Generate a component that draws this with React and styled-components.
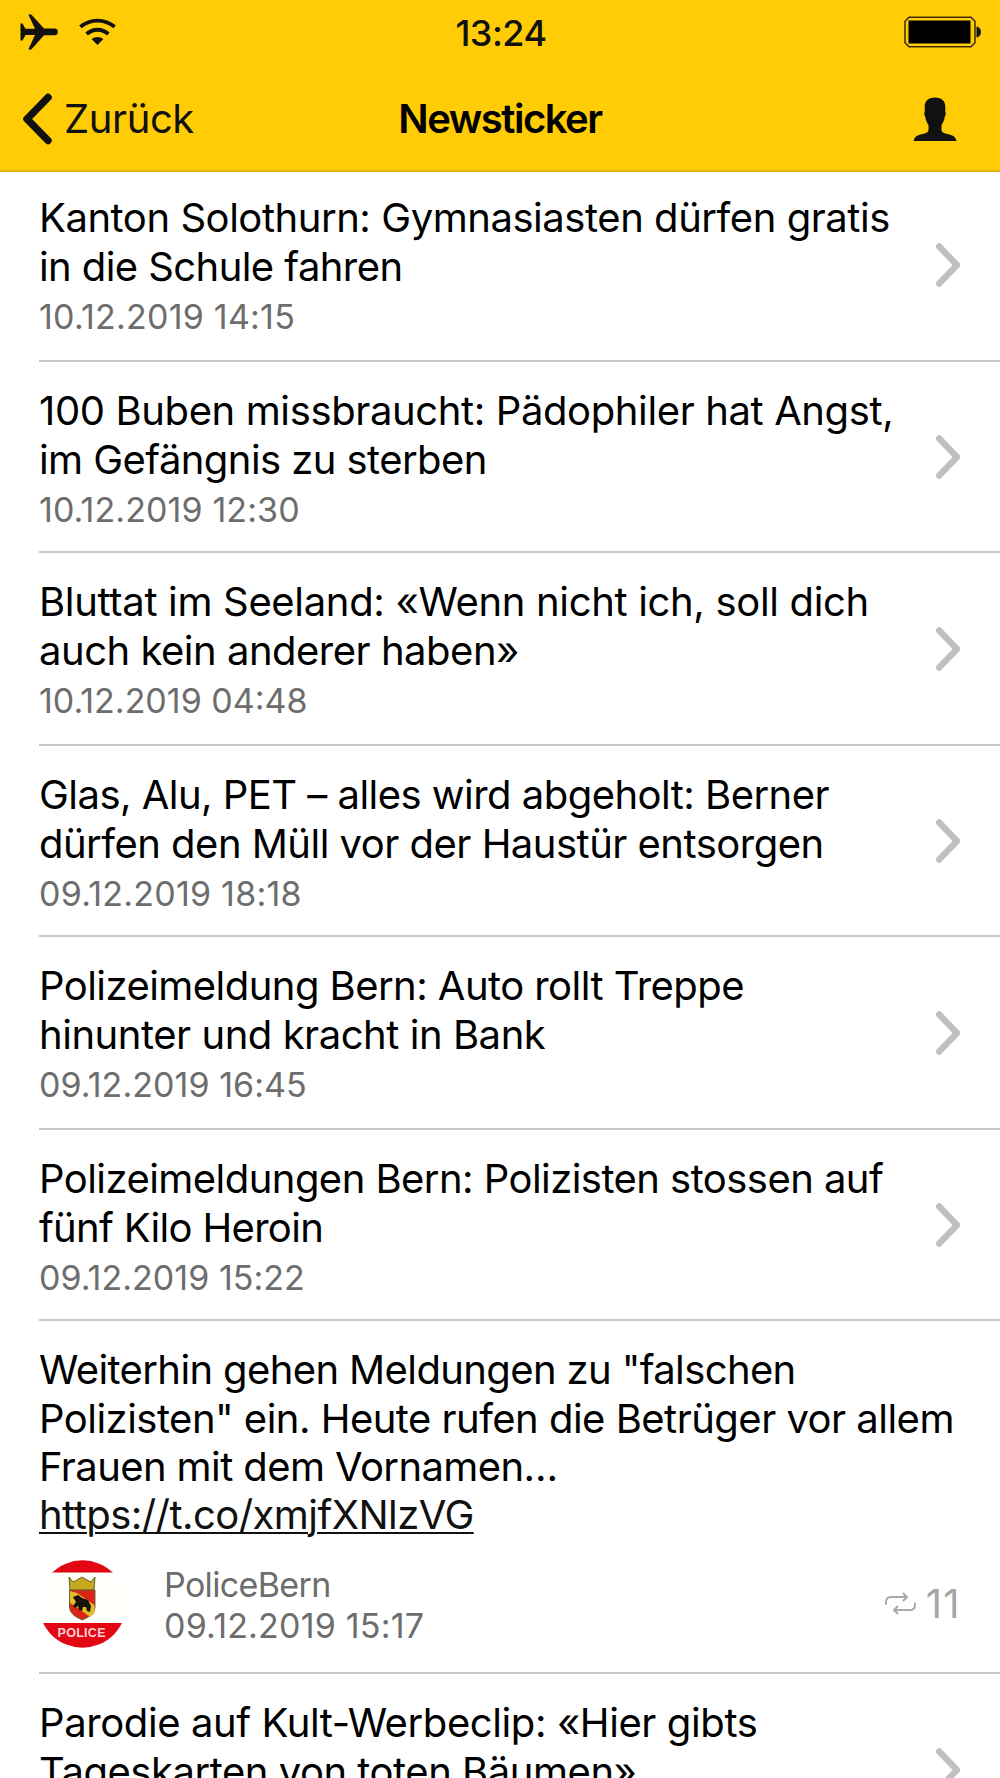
import styled, { createGlobalStyle } from "styled-components"

const GlobalStyle = createGlobalStyle`
  * {
    box-sizing: border-box;
  }
  body {
    margin: 0;
    background: #fff;
    font-family: Inter, "Liberation Sans", sans-serif;
  }
`

const Screen = styled.div`
  width: 1000px;
  height: 1778px;
  overflow: hidden;
  background: #fff;
`

const Header = styled.header`
  height: 172px;
  background: #ffcc05;
  border-bottom: 2px solid #dfb30c;
`

const StatusBar = styled.div`
  display: grid;
  grid-template-columns: 1fr auto 1fr;
  align-items: center;
  height: 64px;
  padding: 0 18px 0 20px;
`

const StatusIcons = styled.div`
  display: flex;
  align-items: center;
  gap: 21px;
`

const Clock = styled.span`
  padding-top: 2px;
  font-size: 36px;
  line-height: 44px;
  font-weight: 450;
  letter-spacing: -0.5px;
  color: #111;
`

const NavBar = styled.nav`
  display: grid;
  grid-template-columns: 1fr auto 1fr;
  align-items: center;
  height: 106px;
  padding: 3px 22px 0;
`

const Back = styled.a`
  display: flex;
  align-items: center;
  gap: 11px;
  font-size: 40px;
  line-height: 48px;
  letter-spacing: -0.4px;
  color: #111;
`

const Title = styled.h1`
  margin: 0;
  font-size: 40px;
  line-height: 48px;
  font-weight: 600;
  letter-spacing: -1.5px;
  color: #000;
`

const Right = styled.div`
  display: flex;
  justify-content: flex-end;
  padding-right: ${(props) => props.$inset || 0}px;
`

/* the list is scrolled a little under the header */
const List = styled.ul`
  margin: -3px 0 0;
  padding: 0;
  list-style: none;
`

const Item = styled.li`
  display: flex;
  align-items: center;
  justify-content: space-between;
  height: ${(props) => props.$height}px;
  margin-left: 39px;
  padding-right: 39px;
  border-bottom: 2px solid #c8c7cc;
`

const ItemText = styled.div`
  align-self: flex-start;
  padding-top: 25.3px;
`

const Tweet = styled(Item)`
  display: block;
  padding-top: 25.3px;
`

const Headline = styled.div`
  font-size: 40px;
  line-height: 48.3px;
  color: #000;
`

const Line = styled.span`
  display: block;
  white-space: nowrap;
  letter-spacing: ${(props) => props.$tracking || 0}px;
`

const Meta = styled.div`
  font-size: 34px;
  line-height: 41px;
  color: #6d6d6d;
`

const DateText = styled(Meta)`
  margin-top: 5.1px;
`

const Link = styled.a`
  display: inline-block;
  letter-spacing: ${(props) => props.$tracking || 0}px;
  color: #111;
  text-decoration: underline;
  text-decoration-thickness: 2px;
  text-underline-offset: 3px;
`

const Author = styled.div`
  display: flex;
  align-items: center;
  margin-top: 20.5px;
`

const AuthorText = styled.div`
  flex: 1;
  margin-left: 38px;
  padding-top: 2px;
`

const Retweets = styled.div`
  display: flex;
  align-items: center;
  gap: 10px;
  font-size: 40px;
  line-height: 48px;
  letter-spacing: 1.4px;
  color: #a6a6a6;
`

const Plane = () => (
  <svg width="38" height="36" viewBox="0 0 38 36">
    <path
      d="M0.5 9.500h2L5.500 14.800h9.500L8.300 0.500h3L24 14.600h10.500a3.200 3.200 0 0 1 0 6.600H24L11.300 35.500h-3L15 21H5.500L2.500 26.500h-2z"
      fill="#111"
    />
  </svg>
)

const Wifi = () => (
  <svg width="37" height="28" viewBox="0 0 37 28">
    <g fill="none" stroke="#111" strokeWidth="3.8">
      <path d="M1.400 8.900C11.500 0.400 25.500 0.400 35.600 8.900" />
      <path d="M7.600 16C14 10.300 23 10.300 29.400 16" />
    </g>
    <path d="M12.6 21C16 18.200 21 18.200 24.400 21L18.500 27z" fill="#111" />
  </svg>
)

const Battery = () => (
  <svg width="78" height="32" viewBox="0 0 78 32">
    <path
      d="M5 1.2h62l4 4v21.600l-4 4H5l-4-4V5.200z"
      fill="none"
      stroke="#3a2d00"
      strokeWidth="1.5"
    />
    <rect x="4.500" y="4.500" width="62" height="23" fill="#000" />
    <path d="M72.5 10.5c6 1 6 10 0 11z" fill="#111" />
  </svg>
)

const BackArrow = () => (
  <svg width="31" height="52" viewBox="0 0 31 52">
    <path
      d="M26 4.5L5 26L26 47.5"
      fill="none"
      stroke="#111"
      strokeWidth="7.5"
      strokeLinecap="round"
      strokeLinejoin="round"
    />
  </svg>
)

const Person = () => (
  <svg width="44" height="44" viewBox="0 0 44 44">
    <path
      d="M22 0.500c7 0 10.500 4 10.300 9.500v5c.8.5.5 3.500-.5 4.500-.5 4-2 6.500-3.300 8.500v5.500c1 3 4.500 3 8 4 4 1 6.500 3 7 6.500H0.500c.5-3.500 3-5.500 7-6.500 3.500-1 7-1 8-4V28c-1.300-2-2.800-4.500-3.300-8.500-1-1-1.300-4-.5-4.500v-5C11.500 4.500 15 .5 22 .5z"
      fill="#111"
    />
  </svg>
)

const Chevron = () => (
  <svg width="25" height="44" viewBox="0 0 25 44">
    <path
      d="M3.200 3.500L21 22L3.200 40.500"
      fill="none"
      stroke="#c0c0c0"
      strokeWidth="6.4"
      strokeLinecap="round"
      strokeLinejoin="round"
    />
  </svg>
)

const RetweetIcon = () => (
  <svg width="31" height="23" viewBox="0 0 31 23">
    <g
      fill="none"
      stroke="#a9a9a9"
      strokeWidth="2"
      strokeLinecap="round"
      strokeLinejoin="round"
    >
      <path d="M1 12V10Q1 5 6 5H21.500M18.500 1.500L22 5L18.500 8.500" />
      <path d="M30 11.500V13Q30 18 25 18H9.500M12.500 14.500L9 18L12.500 21.500" />
    </g>
  </svg>
)

const Avatar = () => (
  <svg width="87" height="88" viewBox="0 0 87 88">
    <clipPath id="round">
      <circle cx="43.500" cy="44" r="43.700" />
    </clipPath>
    <g clipPath="url(#round)">
      <rect width="87" height="88" fill="#fffffb" />
      <rect width="87" height="12.500" fill="#e30613" />
      <rect y="63" width="87" height="25" fill="#e30613" />
      <path
        d="M30 17l4 5 4-2 5-3 5 3 4 2 4-5-1 13H31z"
        fill="#c9a91c"
        stroke="#655b27"
      />
      <path
        d="M30.500 30h25.500v17q0 8-12.700 13q-12.800-5-12.800-13z"
        fill="#db2418"
        stroke="#6d6430"
      />
      <path d="M31 31l7 2 17.500 12v8l-4 4L31 43z" fill="#e1bd26" />
      <path
        d="M34 37l5-2 4 3 6 2 3 6-1 6-3-1-1-4-3 0-1 4-3-1-1-4-3 2-2-2 3-4z"
        fill="#17150b"
      />
      <text
        x="42.500"
        y="77"
        textAnchor="middle"
        fontFamily="Liberation Sans, sans-serif"
        fontSize="12.5"
        fontWeight="700"
        textLength="48"
        fill="#ffd3d6"
      >
        POLICE
      </text>
    </g>
  </svg>
)

const news = [
  {
    lines: [
      {
        text: "Kanton Solothurn: Gymnasiasten dürfen gratis",
        tracking: -0.45,
      },
      { text: "in die Schule fahren", tracking: -0.58 },
    ],
    date: { text: "10.12.2019 14:15", tracking: 0.23 },
    height: 193,
  },
  {
    lines: [
      { text: "100 Buben missbraucht: Pädophiler hat Angst,", tracking: -0.38 },
      { text: "im Gefängnis zu sterben", tracking: -0.57 },
    ],
    date: { text: "10.12.2019 12:30", tracking: 0.1 },
    height: 191,
  },
  {
    lines: [
      {
        text: "Bluttat im Seeland: «Wenn nicht ich, soll dich",
        tracking: -0.33,
      },
      { text: "auch kein anderer haben»", tracking: -0.49 },
    ],
    date: { text: "10.12.2019 04:48" },
    height: 193,
  },
  {
    lines: [
      { text: "Glas, Alu, PET – alles wird abgeholt: Berner", tracking: -0.53 },
      { text: "dürfen den Müll vor der Haustür entsorgen", tracking: -0.51 },
    ],
    date: { text: "09.12.2019 18:18", tracking: 0.23 },
    height: 191,
  },
  {
    lines: [
      { text: "Polizeimeldung Bern: Auto rollt Treppe", tracking: -0.55 },
      { text: "hinunter und kracht in Bank", tracking: -0.46 },
    ],
    date: { text: "09.12.2019 16:45", tracking: 0.06 },
    height: 193,
  },
  {
    lines: [
      {
        text: "Polizeimeldungen Bern: Polizisten stossen auf",
        tracking: -0.55,
      },
      { text: "fünf Kilo Heroin", tracking: -0.68 },
    ],
    date: { text: "09.12.2019 15:22", tracking: 0.03 },
    height: 191,
  },
]

const NewsItem = ({ lines, date, height }) => (
  <Item $height={height}>
    <ItemText>
      <Headline>
        {lines.map((line) => (
          <Line key={line.text} $tracking={line.tracking}>
            {line.text}
          </Line>
        ))}
      </Headline>
      {date && (
        <DateText>
          <Line $tracking={date.tracking}>{date.text}</Line>
        </DateText>
      )}
    </ItemText>
    <Chevron />
  </Item>
)

export default function App() {
  return (
    <Screen>
      <GlobalStyle />
      <Header>
        <StatusBar>
          <StatusIcons>
            <Plane />
            <Wifi />
          </StatusIcons>
          <Clock>13:24</Clock>
          <Right>
            <Battery />
          </Right>
        </StatusBar>
        <NavBar>
          <Back>
            <BackArrow />
            Zurück
          </Back>
          <Title>Newsticker</Title>
          <Right $inset={21}>
            <Person />
          </Right>
        </NavBar>
      </Header>
      <List>
        {news.map((item) => (
          <NewsItem key={item.date.text} {...item} />
        ))}
        <Tweet $height={353}>
          <Headline>
            <Line $tracking={-0.62}>Weiterhin gehen Meldungen zu "falschen</Line>
            <Line $tracking={-0.52}>
              Polizisten" ein. Heute rufen die Betrüger vor allem
            </Line>
            <Line $tracking={-0.6}>Frauen mit dem Vornamen…</Line>
            <Link $tracking={-0.55}>https://t.co/xmjfXNlzVG</Link>
          </Headline>
          <Author>
            <Avatar />
            <AuthorText>
              <Meta>
                <Line $tracking={-0.65}>PoliceBern</Line>
                <Line $tracking={0.2}>09.12.2019 15:17</Line>
              </Meta>
            </AuthorText>
            <Retweets>
              <RetweetIcon />
              11
            </Retweets>
          </Author>
        </Tweet>
        <NewsItem
          height={193}
          lines={[
            {
              text: "Parodie auf Kult-Werbeclip: «Hier gibts",
              tracking: -0.4,
            },
            { text: "Tageskarten von toten Bäumen»", tracking: -0.47 },
          ]}
        />
      </List>
    </Screen>
  )
}
